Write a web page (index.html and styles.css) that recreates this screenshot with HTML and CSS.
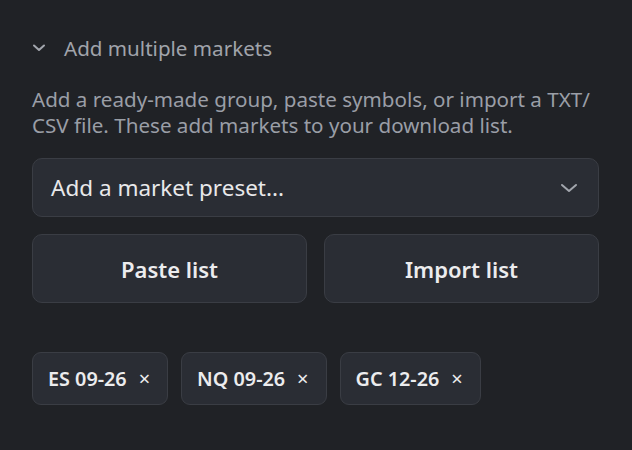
FILE: index.html
```html
<!DOCTYPE html>
<html>
<head>
<meta charset="utf-8">
<link rel="stylesheet" href="styles.css">
</head>
<body>
<div class="panel">
  <div class="section-head">
    <svg class="chev-small" width="14" height="10" viewBox="0 0 14 10"><path d="M2 2.5 L7 7 L12 2.5" fill="none" stroke="#a2a6ad" stroke-width="2" stroke-linecap="round" stroke-linejoin="round"/></svg>
    <span class="section-title">Add multiple markets</span>
  </div>
  <p class="desc">Add a ready-made group, paste symbols, or import a TXT/ CSV file. These add markets to your download list.</p>
  <div class="select">
    <span class="select-text">Add a market preset...</span>
    <svg class="chev" width="18" height="12" viewBox="0 0 18 12"><path d="M2 3 L9 9 L16 3" fill="none" stroke="#a2a6ad" stroke-width="2" stroke-linecap="round" stroke-linejoin="round"/></svg>
  </div>
  <div class="btn-row">
    <button class="btn">Paste list</button>
    <button class="btn">Import list</button>
  </div>
  <div class="chips">
    <span class="chip">ES 09-26 <span class="x">×</span></span>
    <span class="chip">NQ 09-26 <span class="x">×</span></span>
    <span class="chip">GC 12-26 <span class="x">×</span></span>
  </div>
</div>
</body>
</html>
```
FILE: styles.css
```css
html, body {
  margin: 0;
  background: #202226;
}
body {
  width: 632px;
  height: 450px;
  overflow: hidden;
  font-family: "Noto Sans", "Open Sans", sans-serif;
}
.panel {
  padding: 30px 33px 0 32px;
}
.section-head {
  display: flex;
  align-items: center;
  height: 36px;
}
.chev-small {
  margin-right: 18px;
}
.section-title {
  color: #a0a4ab;
  font-size: 20.6px;
}
.desc {
  margin: 20px 0 0 0;
  color: #9a9ea6;
  font-size: 20.6px;
  line-height: 26px;
}
.select {
  margin-top: 20px;
  box-sizing: border-box;
  height: 59px;
  border: 1px solid #3a3d44;
  border-radius: 10px;
  background: #2a2d34;
  display: flex;
  align-items: center;
  justify-content: space-between;
  padding: 0 20px 0 18px;
}
.select-text {
  color: #e8e8ea;
  font-size: 22.5px;
}
.btn-row {
  display: grid;
  grid-template-columns: 1fr 1fr;
  gap: 17px;
  margin-top: 17px;
}
.btn {
  height: 69px;
  border: 1px solid #3a3d44;
  border-radius: 10px;
  background: #2a2d34;
  color: #ececee;
  font-family: inherit;
  font-size: 22px;
  font-weight: 600;
}
.chips {
  display: flex;
  gap: 13px;
  margin-top: 49px;
}
.chip {
  display: inline-flex;
  align-items: center;
  height: 53px;
  box-sizing: border-box;
  padding: 0 17px 0 15px;
  border: 1px solid #3a3d44;
  border-radius: 9px;
  background: #2a2d34;
  color: #ececee;
  font-size: 19.8px;
  font-weight: 600;
}
.x {
  margin-left: 12px;
  font-weight: 400;
  font-size: 20px;
}
```
